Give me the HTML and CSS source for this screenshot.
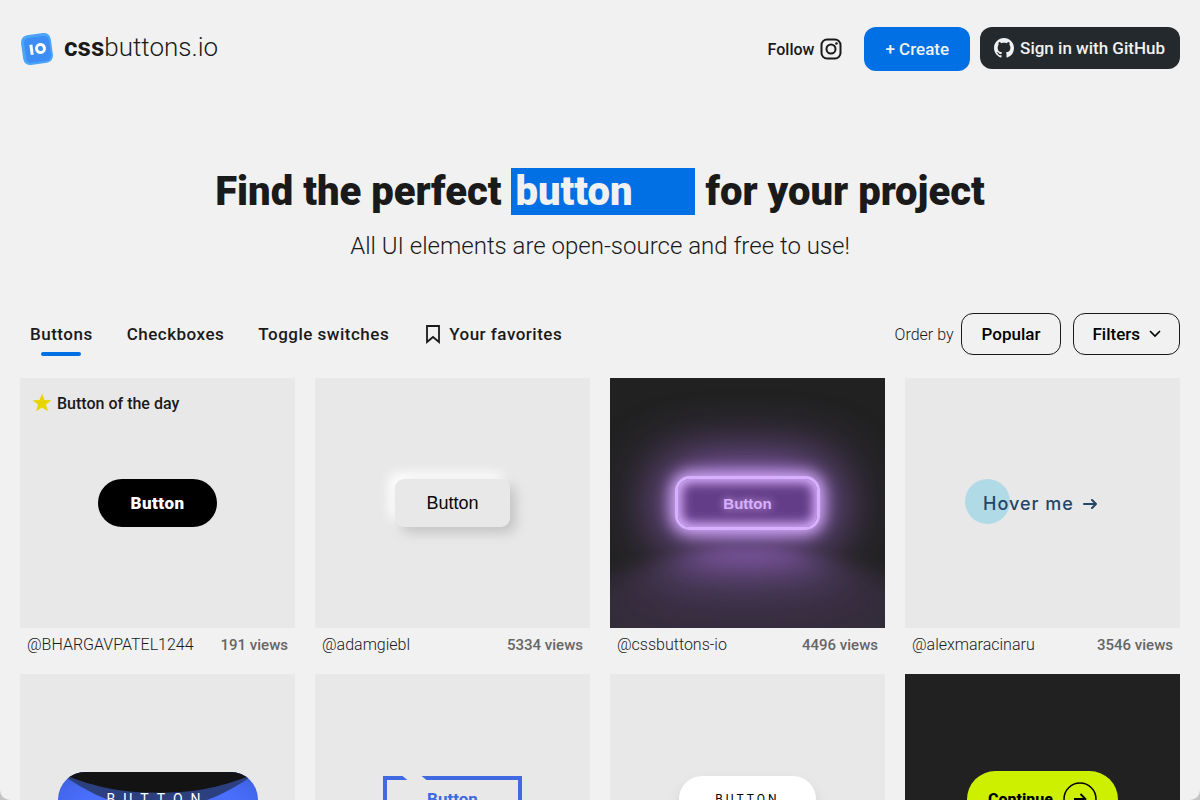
FILE: index.html
```html
<!DOCTYPE html>
<html lang="en">
<head>
    <meta charset="UTF-8">
    <meta name="viewport" content="width=device-width, initial-scale=1.0">
    <title>cssbuttons.io</title>
    <link rel="stylesheet" href="styles.css">
</head>
<body>

    <header class="header">
        <a class="logo" href="#">
            <svg width="34" height="34" viewBox="0 0 34 34">
                <g transform="rotate(-8 17 17)">
                    <rect x="2" y="2" width="30" height="30" rx="7" fill="#4aa5f8"/>
                    <rect x="5" y="5" width="25" height="25" rx="5" fill="#3d8df5"/>
                    <path d="M11.500 12v10" stroke="#fff" stroke-width="3"/>
                    <circle cx="20.500" cy="17" r="4" fill="none" stroke="#fff" stroke-width="3"/>
                </g>
            </svg>
            <span class="logo-text"><b>css</b>buttons.io</span>
        </a>
        <nav class="header-actions">
            <a class="follow" href="#">
                Follow
                <svg width="22" height="22" viewBox="0 0 22 22" fill="none" stroke="#1a1a1a" stroke-width="2">
                    <rect x="1.500" y="1.500" width="19" height="19" rx="5.500"/>
                    <circle cx="11" cy="11" r="4.500"/>
                    <circle cx="16.500" cy="5.500" r="1.300" fill="#1a1a1a" stroke="none"/>
                </svg>
            </a>
            <button class="btn btn-create">+ Create</button>
            <button class="btn btn-github">
                <svg width="20" height="20" viewBox="0 0 16 16" fill="#f1f1f1">
                    <path d="M8 0C3.580 0 0 3.580 0 8c0 3.540 2.290 6.530 5.470 7.590.4.070.55-.17.55-.38 0-.19-.01-.82-.01-1.490-2.010.37-2.530-.49-2.690-.94-.09-.23-.48-.94-.82-1.130-.28-.15-.68-.52-.01-.53.63-.01 1.080.58 1.230.82.72 1.210 1.870.87 2.330.66.07-.52.28-.87.51-1.070-1.780-.2-3.640-.89-3.640-3.950 0-.87.31-1.590.82-2.150-.08-.2-.36-1.020.08-2.120 0 0 .67-.21 2.200.82.64-.18 1.320-.27 2-.27s1.360.09 2 .27c1.530-1.040 2.200-.82 2.200-.82.44 1.100.16 1.920.08 2.120.51.56.82 1.270.82 2.150 0 3.070-1.870 3.750-3.650 3.950.29.25.54.73.54 1.480 0 1.070-.01 1.930-.01 2.200 0 .21.15.46.55.38A8.010 8.010 0 0 0 16 8c0-4.420-3.580-8-8-8z"/>
                </svg>
                Sign in with GitHub
            </button>
        </nav>
    </header>

    <section class="hero">
        <h1>Find the perfect <span class="typed">button</span> for your project</h1>
        <p>All UI elements are open-source and free to use!</p>
    </section>

    <div class="toolbar">
        <nav class="tabs">
            <a class="tab active" href="#">Buttons</a>
            <a class="tab" href="#">Checkboxes</a>
            <a class="tab" href="#">Toggle switches</a>
            <a class="tab" href="#">
                <svg width="19" height="20" viewBox="0 0 19 20" fill="none" stroke="#1a1a1a" stroke-width="1.800">
                    <path d="M4 2h12v16l-6-5-6 5z"/>
                </svg>
                Your favorites
            </a>
        </nav>
        <div class="sorting">
            <span class="order-label">Order by</span>
            <button class="btn-outline">Popular</button>
            <button class="btn-outline btn-filters">
                Filters
                <svg width="12" height="8" viewBox="0 0 12 8" fill="none" stroke="#000" stroke-width="1.600">
                    <path d="M1 1l5 5 5-5"/>
                </svg>
            </button>
        </div>
    </div>

    <main class="grid">
        <article class="card">
            <div class="preview">
                <div class="badge">
                    <svg width="20" height="20" viewBox="0 0 20 20" fill="#e8d500">
                        <path d="M10 .5l2.500 6.500 6.900.3-5.400 4.300 1.900 6.700-5.900-3.800-5.900 3.800L6 11.600.6 7.300l6.900-.3z"/>
                    </svg>
                    Button of the day
                </div>
                <button class="pill">Button</button>
            </div>
            <div class="caption"><a href="#">@BHARGAVPATEL1244</a><span>191 views</span></div>
        </article>

        <article class="card">
            <div class="preview">
                <button class="soft">Button</button>
            </div>
            <div class="caption"><a href="#">@adamgiebl</a><span>5334 views</span></div>
        </article>

        <article class="card">
            <div class="preview dark">
                <button class="neon">Button</button>
            </div>
            <div class="caption"><a href="#">@cssbuttons-io</a><span>4496 views</span></div>
        </article>

        <article class="card">
            <div class="preview">
                <button class="hover-me">
                    <span>Hover me</span>
                    <svg width="15" height="12" viewBox="0 0 15 12" fill="none" stroke="#234567" stroke-width="2" stroke-linecap="round" stroke-linejoin="round">
                        <path d="M1 7h12M9 3l4 4-4 4"/>
                    </svg>
                </button>
            </div>
            <div class="caption"><a href="#">@alexmaracinaru</a><span>3546 views</span></div>
        </article>

        <article class="card">
            <div class="preview">
                <button class="wave">
                    <svg viewBox="0 0 200 56" preserveAspectRatio="none">
                        <path d="M0 0h200C155 32 130 36 100 36S45 32 0 0z" fill="#2c407f"/>
                        <path d="M0 0h200C160 18 130 21 100 21S40 18 0 0z" fill="#131313"/>
                    </svg>
                    <span>BUTTON</span>
                </button>
            </div>
        </article>

        <article class="card">
            <div class="preview">
                <button class="notched">Button</button>
            </div>
        </article>

        <article class="card">
            <div class="preview">
                <button class="white">BUTTON</button>
            </div>
        </article>

        <article class="card">
            <div class="preview dark">
                <button class="continue">
                    Continue
                    <svg width="34" height="34" viewBox="0 0 34 34" fill="none" stroke="#000" stroke-width="1.800">
                        <circle cx="17" cy="17" r="16" stroke-width="1.500"/>
                        <path d="M11 17h11M17.500 12l5 5-5 5"/>
                    </svg>
                </button>
            </div>
        </article>
    </main>

    <div class="window-edge"></div>

</body>
</html>
```
FILE: styles.css
```css
* {
    box-sizing: border-box;
}
body {
    margin: 0;
    background-color: #f1f1f1;
    color: #1a1a1a;
    font-family: Roboto, sans-serif;
    font-size: 16px;
}
a {
    color: inherit;
    text-decoration: none;
}
button {
    font-family: inherit;
    border: none;
    cursor: pointer;
}

/* header */
.header {
    display: flex;
    justify-content: space-between;
    align-items: center;
    height: 98px;
    padding: 0 20px;
}
.logo {
    display: flex;
    align-items: center;
    gap: 10px;
    font-size: 26px;
    font-weight: 300;
}
.logo-text {
    padding-bottom: 4px;
}
.logo b {
    font-weight: 700;
}
.header-actions {
    display: flex;
    align-items: center;
    gap: 10px;
}
.follow {
    display: flex;
    align-items: center;
    gap: 6px;
    margin-right: 12px;
    font-weight: 500;
}
.btn {
    display: flex;
    align-items: center;
    height: 42px;
    border-radius: 12px;
    color: #f1f1f1;
    font-size: 17px;
    font-weight: 500;
}
.btn-create {
    height: 44px;
    padding: 0 21px;
    background-color: #0070e4;
}
.btn-github {
    gap: 6px;
    margin-bottom: 2px;
    padding: 0 15px 0 14px;
    background-color: #24292e;
}

/* hero */
.hero {
    margin-top: 70px;
    text-align: center;
}
.hero h1 {
    margin: 0;
    font-size: 40px;
    font-weight: 900;
    line-height: 47px;
}
.typed {
    display: inline-block;
    width: 184px;
    padding-left: 4px;
    background-color: #0070e4;
    color: #f1f1f1;
    text-align: left;
}
.hero p {
    margin: 16px 0 0;
    font-size: 24px;
    font-weight: 300;
    line-height: 30px;
}

/* tabs and sorting */
.toolbar {
    display: flex;
    justify-content: space-between;
    align-items: center;
    margin-top: 52px;
    padding: 0 20px;
}
.tabs {
    display: flex;
    gap: 14px;
}
.tab {
    position: relative;
    display: flex;
    align-items: center;
    gap: 7px;
    height: 42px;
    padding: 0 10px;
    font-size: 17px;
    font-weight: 500;
    letter-spacing: 0.5px;
}
.tab.active::after {
    content: "";
    position: absolute;
    left: 50%;
    bottom: -1px;
    width: 40px;
    height: 4px;
    margin-left: -20px;
    border-radius: 2px;
    background-color: #0070e4;
}
.sorting {
    display: flex;
    align-items: center;
}
.order-label {
    margin-right: 7px;
    font-weight: 300;
}
.btn-outline {
    display: flex;
    align-items: center;
    gap: 9px;
    height: 42px;
    padding: 0 20px;
    border: 1px solid #1a1a1a;
    border-radius: 12px;
    background: none;
    color: #000;
    font-size: 17px;
    font-weight: 500;
}
.btn-filters {
    margin-left: 12px;
    padding: 0 18px;
}

/* cards */
.grid {
    display: grid;
    grid-template-columns: repeat(4, 1fr);
    gap: 12px 20px;
    margin-top: 23px;
    padding: 0 20px;
}
.preview {
    position: relative;
    display: flex;
    justify-content: center;
    align-items: center;
    height: 250px;
    overflow: hidden;
    background-color: #e8e8e8;
}
.dark {
    background-color: #212121;
}
.badge {
    position: absolute;
    top: 15px;
    left: 12px;
    display: flex;
    align-items: center;
    gap: 5px;
    font-weight: 500;
}
.caption {
    display: flex;
    justify-content: space-between;
    align-items: center;
    height: 34px;
    padding: 0 7px 1px;
    font-weight: 300;
}
.caption span {
    color: #666;
    font-size: 15px;
    font-weight: 500;
}

.pill {
    width: 119px;
    height: 48px;
    border-radius: 24px;
    background-color: #000;
    color: #fff;
    font-size: 17px;
    font-weight: 900;
    letter-spacing: 0.5px;
}

.soft {
    width: 115px;
    height: 48px;
    border-radius: 9px;
    background-color: #e8e8e8;
    box-shadow: 6px 6px 12px #c5c5c5, -6px -6px 12px #fff;
    color: #090909;
    font-family: "Liberation Sans", Arial, sans-serif;
    font-size: 18px;
}

.neon {
    position: relative;
    height: 54px;
    padding: 0 45px;
    border: 3px solid #d9b0ff;
    border-radius: 15px;
    background-color: #643d88;
    box-shadow: 0 0 15px 4px #d9b0ff,
        0 0 60px 15px rgba(191, 123, 255, 0.78),
        inset 0 0 11px 4px #d9b0ff;
    color: #d9b0ff;
    font-family: "Liberation Sans", Arial, sans-serif;
    font-size: 15px;
    font-weight: 700;
    text-shadow: 0 0 8px #d9b0ff;
}
/* reflection on the floor */
.neon::after {
    content: "";
    position: absolute;
    top: 120%;
    left: 0;
    width: 100%;
    height: 100%;
    background-color: rgba(191, 123, 255, 0.78);
    filter: blur(30px);
    opacity: 0.7;
    transform: perspective(23px) rotateX(35deg) scale(1, 0.6);
}

.hover-me {
    position: relative;
    display: flex;
    align-items: center;
    gap: 9px;
    height: 48px;
    padding: 0 22px 0 18px;
    background: none;
    color: #234567;
    font-family: Inter, sans-serif;
    font-size: 18px;
    font-weight: 500;
    letter-spacing: 1px;
}
.hover-me::before {
    content: "";
    position: absolute;
    top: 0;
    left: 0;
    width: 45px;
    height: 45px;
    border-radius: 50%;
    background-color: #b1dae7;
}
.hover-me span,
.hover-me svg {
    position: relative;
}

.wave {
    position: relative;
    width: 200px;
    height: 55px;
    border-radius: 28px;
    overflow: hidden;
    background: radial-gradient(#4a6fff 50%, #3a5bd0);
    color: #fff;
    font-size: 14px;
    letter-spacing: 8px;
}
.wave svg {
    position: absolute;
    top: 0;
    left: 0;
    width: 100%;
    height: 100%;
}
.wave span {
    position: relative;
}

.notched {
    position: relative;
    width: 139px;
    height: 46px;
    border: 4px solid #4169e1;
    background: none;
    color: #4169e1;
    font-size: 17px;
    font-weight: 700;
}
.notched::before {
    content: "";
    position: absolute;
    top: -4px;
    left: 18px;
    width: 19px;
    height: 4px;
    background-color: #e8e8e8;
    transform: skewX(50deg);
}

.white {
    width: 137px;
    height: 46px;
    border-radius: 23px;
    background-color: #fff;
    box-shadow: 0 8px 15px rgba(0, 0, 0, 0.1);
    color: #000;
    font-size: 12px;
    font-weight: 400;
    letter-spacing: 3px;
}

.continue {
    display: flex;
    align-items: center;
    gap: 10px;
    height: 57px;
    padding: 0 21px;
    border-radius: 29px;
    background-color: #cdf000;
    color: #000;
    font-size: 16px;
    font-weight: 800;
}

/* rounded bottom corners of the window */
.window-edge {
    position: fixed;
    inset: 0;
    border-radius: 0 0 10px 10px;
    box-shadow: 0 0 0 10px #c4c4c4;
    pointer-events: none;
}
```
